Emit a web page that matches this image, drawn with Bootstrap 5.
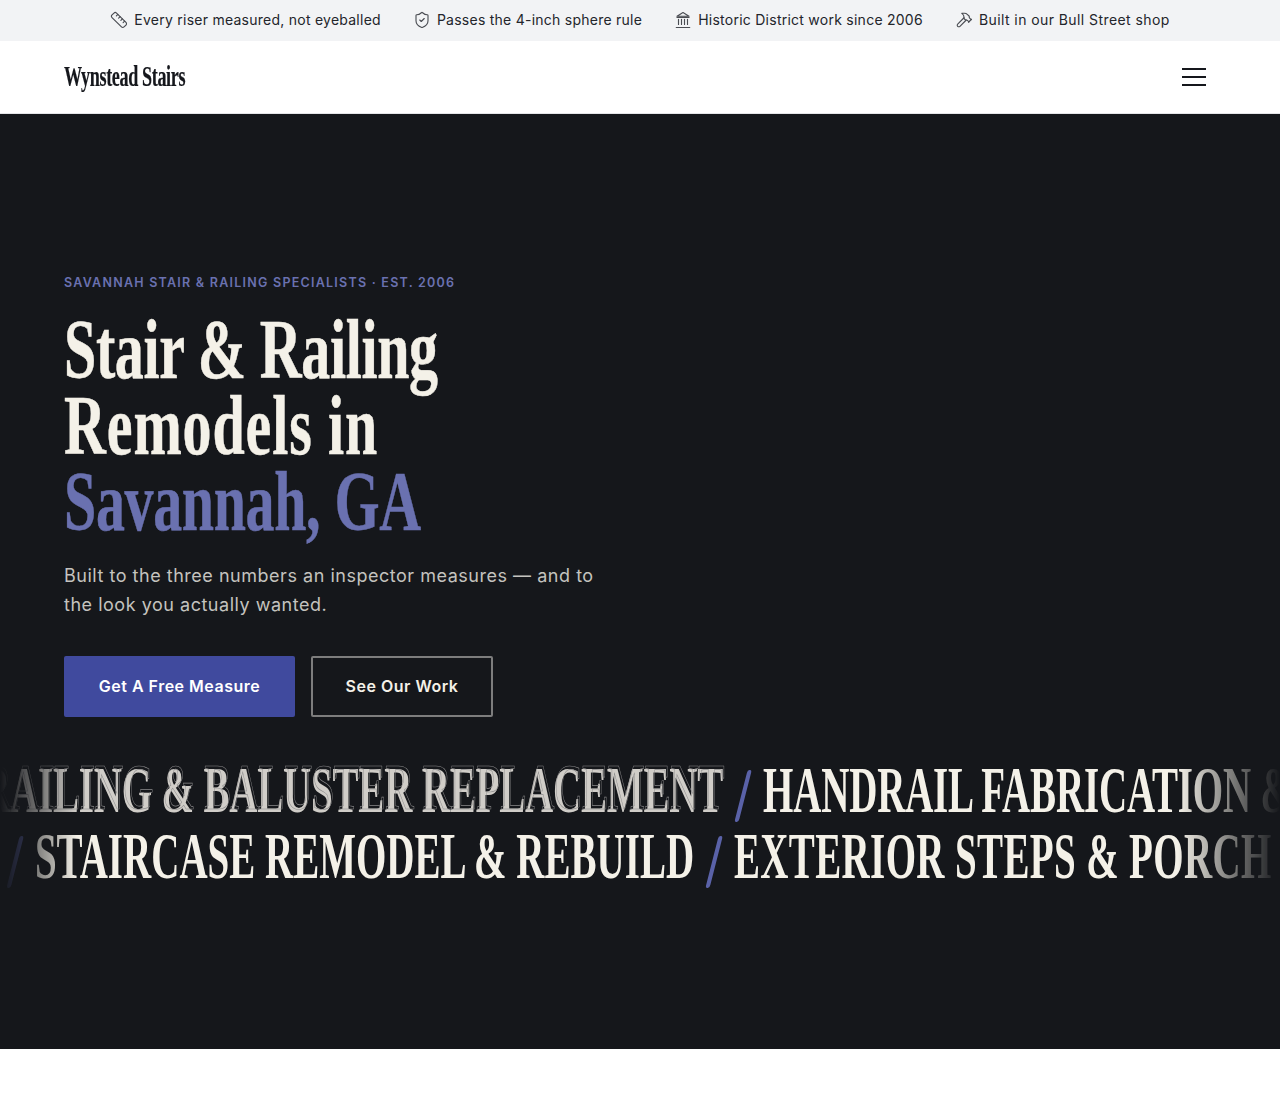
<!DOCTYPE html>
<html lang="en">
<head>
    <meta charset="UTF-8">
    <meta name="viewport" content="width=device-width, initial-scale=1">
    <title>Wynstead Stairs</title>
    <link href="https://cdn.jsdelivr.net/npm/bootstrap@5.3.0/dist/css/bootstrap.min.css" rel="stylesheet">
    <script src="https://cdn.jsdelivr.net/npm/bootstrap@5.3.0/dist/js/bootstrap.bundle.min.js"></script>
    <style>
        body { font-family: "Inter", "Liberation Sans", sans-serif; background: #fff; }

        /* Top trust strip */
        .trust-strip { height: 41px; padding-bottom: 1px; background: #f2f3f5; color: #23252b; font-size: 14px; letter-spacing: .25px; gap: 32px; }
        .trust-item { gap: 6px; }
        .trust-item span { margin-top: -1px; }
        .trust-strip svg { width: 18px; height: 18px; flex: none; stroke: #4a4c52; fill: none; stroke-width: 1.5; stroke-linecap: round; stroke-linejoin: round; }
        .trust-item .trust-wide { letter-spacing: .42px; }

        /* Header */
        .site-header { height: 73px; padding: 0 64px; border-bottom: 1px solid #e4e5e8; }
        .site-logo { display: inline-block; font-family: "Liberation Serif", serif; font-size: 29px; letter-spacing: -.6px; color: #15171c; font-weight: 700; text-decoration: none; transform: scaleX(.625); transform-origin: left center; -webkit-text-stroke: .2px #15171c; }
        .menu-lines { width: 24px; gap: 6px; margin-right: 10px; }
        .menu-lines span { height: 2px; background: #15171c; display: block; }

        /* Hero */
        .hero-dark { height: 935px; background: #15171b; padding-top: 161px; }
        .hero-inner { padding: 0 64px; }
        .hero-eyebrow { font-size: 12.5px; font-weight: 600; letter-spacing: 1.25px; color: #6a71b0; line-height: 16px; margin-bottom: 21px; }
        .hero-title { font-family: "Liberation Serif", serif; font-size: 84px; line-height: 76px; font-weight: 700; letter-spacing: -.5px; color: #f4f1e8; margin-bottom: 21px; transform: scaleX(.69); transform-origin: left top; white-space: nowrap; -webkit-text-stroke: .5px currentColor; }
        .hero-title .title-mid { display: inline; color: inherit; letter-spacing: 1.3px; }
        .hero-title .title-place { display: block; color: #6a71b0; }
        .hero-sub { font-size: 18px; line-height: 29px; color: #c4c3bf; width: 545px; margin-bottom: 37px; letter-spacing: .52px; }
        .btn-measure, .btn-work { height: 61px; padding-bottom: 8px; font-size: 16px; letter-spacing: .5px; font-weight: 600; border-radius: 2px; display: inline-flex; align-items: center; justify-content: center; }
        .btn-measure { width: 231px; background: #404a9e; color: #fff; border: 0; }
        .btn-work { width: 182px; color: #f4f1e8; border: 2px solid #7d7d7d; background: transparent; }

        /* Service ticker */
        .ticker-wrap { margin-top: 40px; -webkit-mask-image: linear-gradient(90deg, transparent 0, #000 6%, #000 92%, transparent 100%); mask-image: linear-gradient(90deg, transparent 0, #000 6%, #000 92%, transparent 100%); }
        .ticker-line { height: 66px; overflow: hidden; }
        .ticker-run { font-family: "Liberation Serif", serif; font-size: 65px; line-height: 66px; font-weight: 700; white-space: nowrap; color: #f4f1e8; width: 2400px; transform: scaleX(.6); transform-origin: left top; }
        .ticker-slash { display: inline-block; width: 6.500px; height: 52px; background: #5a62a8; border-radius: 3px; transform: skewX(-23deg); margin: 0 30px; vertical-align: -10px; }
        .ticker-ghost { position: relative; color: #d0cdc8; letter-spacing: -.3px; }
        .ticker-ghost::after { content: attr(data-text); position: absolute; left: 2px; top: 0; color: transparent; -webkit-text-stroke: .7px #8a898a; }
        .ticker-tight { letter-spacing: -.3px; }
        .ticker-loose { letter-spacing: .6px; }
        .ticker-one { margin-left: -18px; }
        .ticker-two { margin-left: -5px; }
    </style>
</head>
<body>

<!-- Top strip -->
<div class="trust-strip d-flex align-items-center justify-content-center">
    <div class="trust-item d-flex align-items-center">
        <svg viewBox="0 0 24 24"><path d="M21.300 15.300a2.400 2.400 0 0 1 0 3.400l-2.600 2.600a2.400 2.400 0 0 1-3.400 0L2.700 8.700a2.410 2.410 0 0 1 0-3.400l2.600-2.600a2.410 2.410 0 0 1 3.400 0z"/><path d="M14.500 12.500l2-2M11.500 9.500l2-2M8.500 6.500l2-2M17.500 15.500l2-2"/></svg>
        <span>Every riser measured, not eyeballed</span>
    </div>
    <div class="trust-item d-flex align-items-center">
        <svg viewBox="0 0 24 24"><path d="M20 13c0 5-3.500 7.500-7.700 9a1 1 0 0 1-.6 0C7.500 20.500 4 18 4 13V6a1 1 0 0 1 1-1c2 0 4.500-1.200 6.200-2.700a1.200 1.200 0 0 1 1.600 0C14.500 3.800 17 5 19 5a1 1 0 0 1 1 1z"/><path d="M9 12l2 2 4-4"/></svg>
        <span>Passes the 4-inch sphere rule</span>
    </div>
    <div class="trust-item d-flex align-items-center">
        <svg viewBox="0 0 24 24"><path d="M3 22h18M6 18v-7M10 18v-7M14 18v-7M18 18v-7"/><path d="M12 2l8 5H4z"/><path d="M4 8.500h16"/></svg>
        <span>Historic District work since 2006</span>
    </div>
    <div class="trust-item d-flex align-items-center">
        <svg viewBox="0 0 24 24"><path d="M15 12l-8.400 8.400a1 1 0 1 1-3-3L12 9"/><path d="M18 15l4-4"/><path d="M21.500 11.500l-1.900-1.900A2 2 0 0 1 19 8.200V7l-2.300-2.300A6 6 0 0 0 12.500 3L9 3l.9.800A6.200 6.200 0 0 1 12 8.400V10l2 2h1.200a2 2 0 0 1 1.400.6l1.900 1.900"/></svg>
        <span class="trust-wide">Built in our Bull Street shop</span>
    </div>
</div>

<!-- Header -->
<header class="site-header d-flex align-items-center justify-content-between">
    <a class="site-logo" href="#">Wynstead Stairs</a>
    <div class="menu-lines d-flex flex-column"><span></span><span></span><span></span></div>
</header>

<!-- Hero -->
<section class="hero-dark overflow-hidden">
    <div class="hero-inner">
        <div class="hero-eyebrow">SAVANNAH STAIR &amp; RAILING SPECIALISTS · EST. 2006</div>
        <h1 class="hero-title">Stair &amp; Railing<br><span class="title-mid">Remodels in</span><span class="title-place">Savannah, GA</span></h1>
        <p class="hero-sub">Built to the three numbers an inspector measures — and to the look you actually wanted.</p>
        <div class="d-flex gap-3">
            <a class="btn btn-measure" href="#">Get A Free Measure</a>
            <a class="btn btn-work" href="#">See Our Work</a>
        </div>
    </div>
    <div class="ticker-wrap">
        <div class="ticker-line"><div class="ticker-run ticker-one"><span class="ticker-ghost" data-text="RAILING &amp; BALUSTER REPLACEMENT">RAILING &amp; BALUSTER REPLACEMENT</span><i class="ticker-slash"></i><span class="ticker-tight">HANDRAIL FABRICATION &amp; REPAIR</span></div></div>
        <div class="ticker-line"><div class="ticker-run ticker-two"><i class="ticker-slash"></i>STAIRCASE REMODEL &amp; REBUILD<i class="ticker-slash"></i><span class="ticker-loose">EXTERIOR STEPS &amp; PORCH RAILS</span></div></div>
    </div>
</section>

</body>
</html>
